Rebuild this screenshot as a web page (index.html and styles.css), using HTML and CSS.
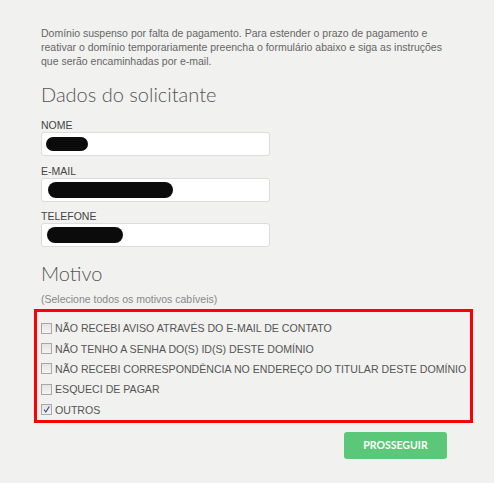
FILE: index.html
```html
<!DOCTYPE html>
<html lang="pt">
<head>
<meta charset="utf-8">
<link rel="stylesheet" href="styles.css">
</head>
<body>
<div class="panel">
  <p class="intro">Domínio suspenso por falta de pagamento. Para estender o prazo de pagamento e reativar o domínio temporariamente preencha o formulário abaixo e siga as instruções que serão encaminhadas por e-mail.</p>

  <h2 class="title">Dados do solicitante</h2>

  <div class="field">
    <label class="label">NOME</label>
    <div class="input"><span class="blob blob-nome"></span></div>
  </div>
  <div class="field">
    <label class="label">E-MAIL</label>
    <div class="input"><span class="blob blob-email"></span></div>
  </div>
  <div class="field">
    <label class="label">TELEFONE</label>
    <div class="input"><span class="blob blob-tel"></span></div>
  </div>

  <h2 class="title title-motivo">Motivo</h2>
  <p class="hint">(Selecione todos os motivos cabíveis)</p>

  <div class="reasons">
    <label class="reason"><span class="box"></span>NÃO RECEBI AVISO ATRAVÉS DO E-MAIL DE CONTATO</label>
    <label class="reason"><span class="box"></span>NÃO TENHO A SENHA DO(S) ID(S) DESTE DOMÍNIO</label>
    <label class="reason"><span class="box"></span>NÃO RECEBI CORRESPONDÊNCIA NO ENDEREÇO DO TITULAR DESTE DOMÍNIO</label>
    <label class="reason"><span class="box"></span>ESQUECI DE PAGAR</label>
    <label class="reason"><span class="box checked"><svg viewBox="0 0 11 11" width="11" height="11"><path d="M3 5.5 L4.8 8 L8.3 2.5" fill="none" stroke="#3b4a8c" stroke-width="1.2"/></svg></span>OUTROS</label>
  </div>

  <div class="actions">
    <button class="btn">PROSSEGUIR</button>
  </div>
</div>
</body>
</html>
```

FILE: styles.css
```css
html, body {
  margin: 0;
  padding: 0;
  background: #ffffff;
}
.panel {
  width: 494px;
  height: 483px;
  box-sizing: border-box;
  background: #f1f1ef;
  padding: 26px 0 0 41px;
  font-family: "Liberation Sans", Arial, sans-serif;
  color: #555;
}
.intro {
  margin: 0;
  width: 416px;
  font-size: 10.5px;
  line-height: 14px;
  color: #666;
}
.title {
  margin: 14px 0 13px;
  font-family: Lato, "Open Sans", sans-serif;
  font-weight: 300;
  font-size: 20px;
  line-height: 24px;
  color: #555;
}
.field {
  display: flex;
  flex-direction: column;
  margin-bottom: 8.5px;
}
.label {
  font-size: 10.5px;
  line-height: 13px;
  color: #444;
}
.input {
  width: 229px;
  height: 24px;
  box-sizing: border-box;
  background: #fff;
  border: 1px solid #dcdcdc;
  border-radius: 3px;
  display: flex;
  align-items: center;
  padding-left: 4px;
}
.blob {
  display: block;
  height: 14px;
  background: #0b0b0b;
  border-radius: 8px;
}
.blob-nome { width: 42px; }
.blob-email { width: 125px; height: 16px; margin-left: 2px; }
.blob-tel { width: 76px; height: 16px; margin-left: 1px; }
.title-motivo {
  margin: 14px 0 7px;
}
.hint {
  margin: 0 0 3px;
  font-size: 10.5px;
  line-height: 14px;
  color: #888;
}
.reasons {
  margin-left: -7px;
  width: 439px;
  box-sizing: border-box;
  border: 3px solid #ff0000;
  padding: 6px 0 0 4px;
  display: flex;
  flex-direction: column;
}
.reason {
  display: flex;
  align-items: center;
  height: 20.4px;
  font-size: 10.6px;
  color: #555;
  white-space: nowrap;
}
.box {
  width: 11px;
  height: 11px;
  box-sizing: border-box;
  border: 1px solid #a8a8a8;
  background: linear-gradient(#e4e4e4, #f4f4f4);
  margin-right: 3px;
  display: block;
}
.box svg {
  display: block;
  margin: -1px;
}
.actions {
  display: flex;
  justify-content: flex-end;
  width: 406px;
  margin-top: 9px;
}
.btn {
  width: 103px;
  height: 27px;
  border: none;
  border-radius: 3px;
  background: #5ac878;
  color: #fff;
  font-family: Lato, "Liberation Sans", sans-serif;
  font-weight: 700;
  font-size: 10.5px;
  padding: 0;
}
```
